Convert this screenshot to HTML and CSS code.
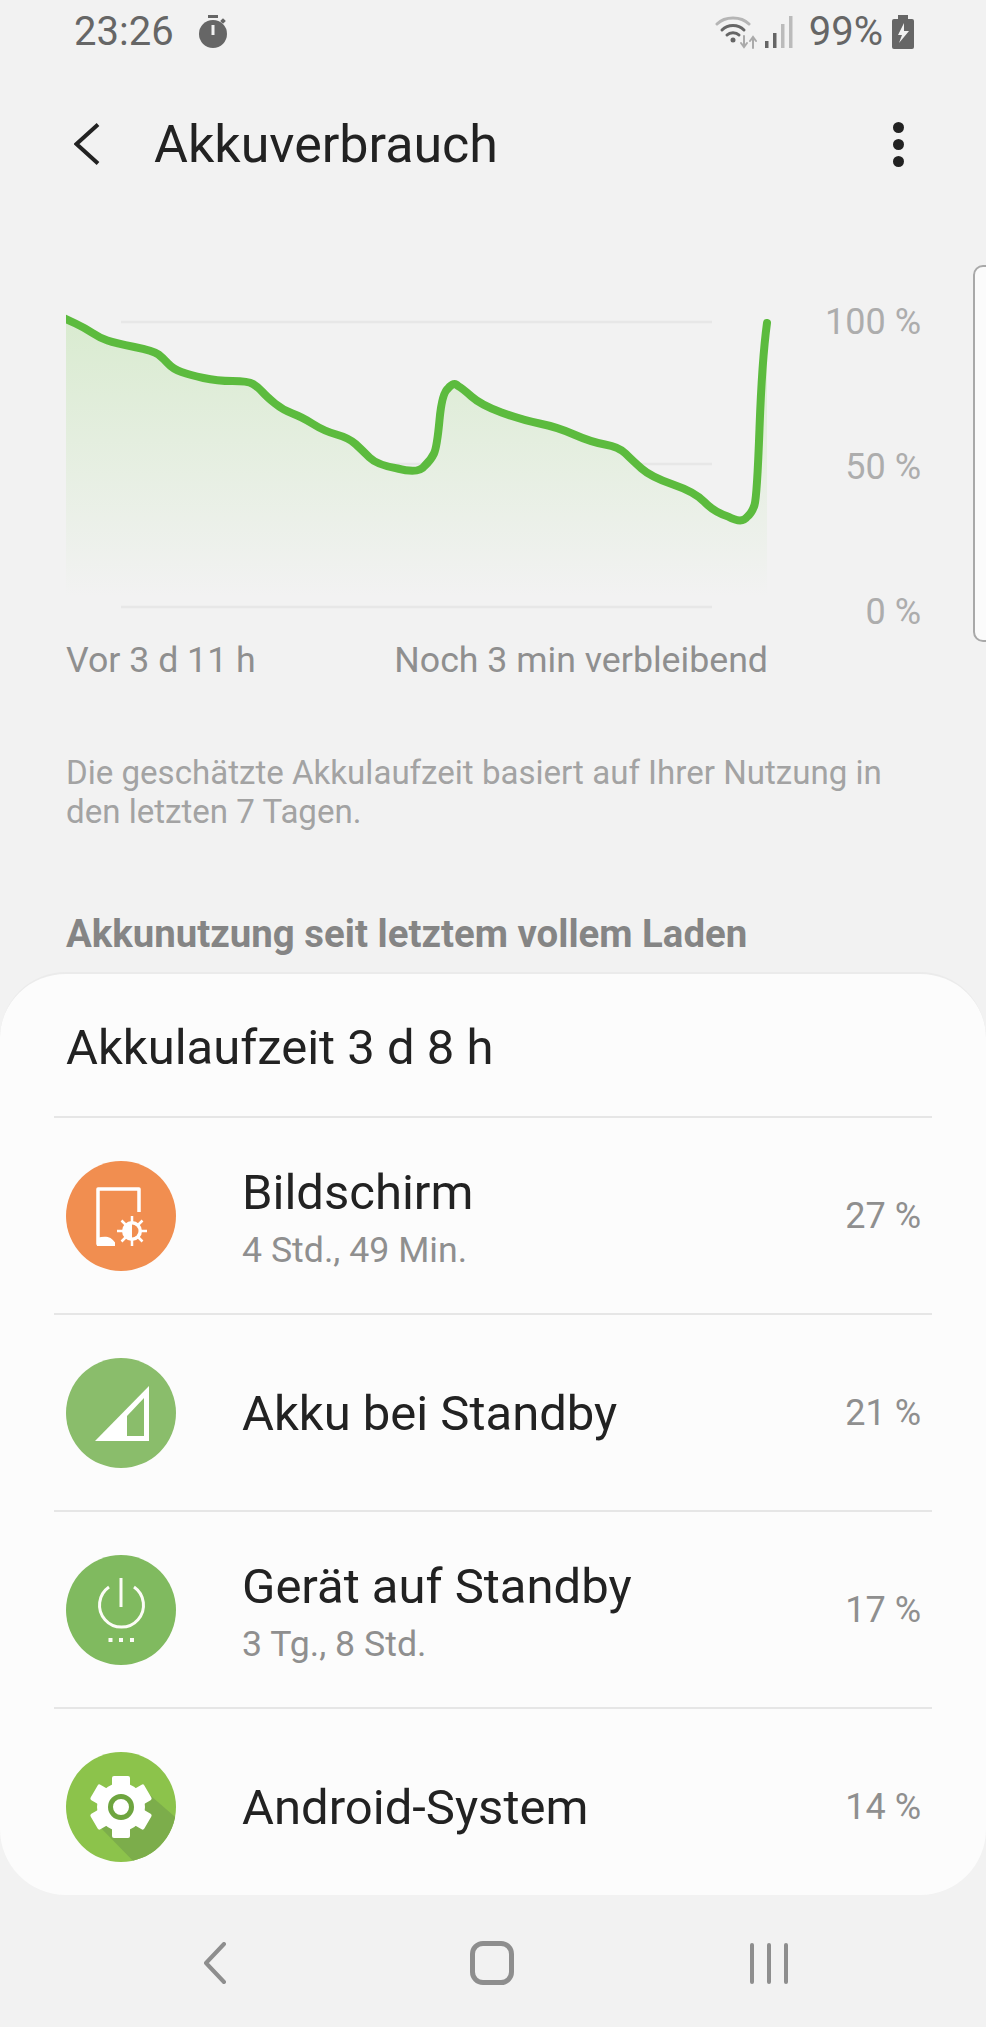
FILE: index.html
```html
<!DOCTYPE html>
<html lang="de">
<head>
    <meta charset="UTF-8">
    <meta name="viewport" content="width=device-width, initial-scale=1.0">
    <title>Akkuverbrauch</title>
    <link rel="stylesheet" href="styles.css">
</head>
<body>
<div class="screen">

    <div class="status">
        <div class="status-left">
            <span class="clock">23:26</span>
            <svg class="stopwatch" width="28" height="34" viewBox="0 0 28 34">
                <rect x="9" y="0" width="10" height="3" fill="#666"/>
                <circle cx="14" cy="19" r="14" fill="#666"/>
                <rect x="22" y="4" width="4" height="4" transform="rotate(45 24 6)" fill="#666"/>
                <rect x="12.500" y="10" width="3" height="10" fill="#f2f2f2"/>
            </svg>
        </div>
        <div class="status-right">
            <svg class="wifi" width="42" height="34" viewBox="0 0 42 34" fill="none" stroke-linecap="round">
                <path d="M2 9 C10 1 26 1 34 9" stroke="#b5b5b5" stroke-width="3"/>
                <path d="M7 15 C13 9 23 9 29 15" stroke="#666" stroke-width="3"/>
                <path d="M12 20 C15 17 21 17 24 20" stroke="#666" stroke-width="3"/>
                <circle cx="18" cy="25" r="2.500" fill="#666"/>
                <path d="M29 21 V31 M26 28 L29 32 L32 28" stroke="#aaa" stroke-width="2"/>
                <path d="M38 33 V23 M35 26 L38 22 L41 26" stroke="#aaa" stroke-width="2"/>
            </svg>
            <svg class="bars" width="28" height="34" viewBox="0 0 28 34">
                <rect x="0" y="26" width="3.500" height="7" fill="#666"/>
                <rect x="8" y="18" width="3.500" height="15" fill="#666"/>
                <rect x="16" y="9" width="3.500" height="24" fill="#bbb"/>
                <rect x="24" y="1" width="3.500" height="32" fill="#bbb"/>
            </svg>
            <span class="percent">99%</span>
            <svg class="battery" width="22" height="34" viewBox="0 0 22 34">
                <rect x="6" y="0" width="10" height="4" fill="#666"/>
                <rect x="0" y="4" width="22" height="30" rx="2" fill="#666"/>
                <path d="M12 8 L6 20 H10 L7 28 L17 16 H12 Z" fill="#f2f2f2"/>
            </svg>
        </div>
    </div>

    <div class="toolbar">
        <svg class="back" width="26" height="42" viewBox="0 0 26 42" fill="none">
            <path d="M24 1.500 L2.500 21 L24 40.500" stroke="#222" stroke-width="4"/>
        </svg>
        <h1>Akkuverbrauch</h1>
        <div class="more"><i></i><i></i><i></i></div>
    </div>

    <div class="chart">
        <svg class="graph" width="710" height="320" viewBox="66 300 710 320">
            <defs>
                <linearGradient id="fade" x1="0" y1="0" x2="0" y2="1">
                    <stop offset="0" stop-color="#d9ebd0"/>
                    <stop offset="1" stop-color="#f2f2f2"/>
                </linearGradient>
            </defs>
            <path d="M121 322 H712 M121 464 H712 M121 607 H712" stroke="#e7e7e7" stroke-width="2.500"/>
            <path fill="url(#fade)" d="M66 319 L75.500 323.500 Q85 328 92.500 333 Q100 338 107.500 340.500 Q115 343 134.500 347 Q154 351 158.500 354.500 Q163 358 168 363.500 Q173 369 181.500 372 Q190 375 203.500 378 Q217 381 232.500 381 Q248 381 253 384 Q258 387 262.500 392 Q267 397 275 403.500 Q283 410 292.500 413.500 Q302 417 313 424 Q324 431 336.500 434.500 Q349 438 355.500 444 Q362 450 369.500 457.500 Q377 465 397.500 468.500 Q419 474 424.500 466 Q431 460 434 453.500 Q437 447 439.500 420 Q442 393 448 388.500 Q454 381 458 386 Q462 388 471.500 396.500 Q481 405 501.500 412.500 Q522 420 539.500 423.500 Q557 427 574 434.500 Q591 442 605 444.500 Q619 447 625.500 453.500 Q632 460 641.500 468.500 Q651 477 673 484.500 Q695 492 704.500 502 Q714 512 728 516.500 Q742 524 747 517 Q752 513 754.500 505 Q757 497 759.500 428.500 Q762 360 767 323 V596 H66 Z"/>
            <path fill="none" stroke="#5cbb3e" stroke-width="8" stroke-linecap="round" stroke-linejoin="round" d="M66 319 L75.500 323.500 Q85 328 92.500 333 Q100 338 107.500 340.500 Q115 343 134.500 347 Q154 351 158.500 354.500 Q163 358 168 363.500 Q173 369 181.500 372 Q190 375 203.500 378 Q217 381 232.500 381 Q248 381 253 384 Q258 387 262.500 392 Q267 397 275 403.500 Q283 410 292.500 413.500 Q302 417 313 424 Q324 431 336.500 434.500 Q349 438 355.500 444 Q362 450 369.500 457.500 Q377 465 397.500 468.500 Q419 474 424.500 466 Q431 460 434 453.500 Q437 447 439.500 420 Q442 393 448 388.500 Q454 381 458 386 Q462 388 471.500 396.500 Q481 405 501.500 412.500 Q522 420 539.500 423.500 Q557 427 574 434.500 Q591 442 605 444.500 Q619 447 625.500 453.500 Q632 460 641.500 468.500 Q651 477 673 484.500 Q695 492 704.500 502 Q714 512 728 516.500 Q742 524 747 517 Q752 513 754.500 505 Q757 497 759.500 428.500 Q762 360 767 323"/>
        </svg>
        <div class="axis">
            <span>100 %</span>
            <span>50 %</span>
            <span>0 %</span>
        </div>
    </div>

    <div class="times">
        <span>Vor 3 d 11 h</span>
        <span>Noch 3 min verbleibend</span>
    </div>

    <p class="note">Die geschätzte Akkulaufzeit basiert auf Ihrer Nutzung in den letzten 7 Tagen.</p>

    <h2>Akkunutzung seit letztem vollem Laden</h2>

    <div class="card">
        <div class="card-title">Akkulaufzeit 3 d 8 h</div>

        <div class="row">
            <svg class="icon" width="110" height="110" viewBox="-55 -55 110 110">
                <circle r="55" fill="#f18e50"/>
                <path d="M-6 28 H-23 V-27 H18 V-4" fill="none" stroke="#fff" stroke-width="3.500" stroke-linejoin="round"/>
                <path d="M-24 22 C-16 20 -10 20 -6 27 V30 H-24 Z" fill="#fff"/>
                <path d="M11 0 V30 M-4 15 H26 M0.500 4.500 L21.500 25.500 M21.500 4.500 L0.500 25.500" stroke="#fff" stroke-width="2.500"/>
                <circle cx="11" cy="15" r="10" fill="#fff"/>
                <path d="M11 8.500 A6.500 6.500 0 0 1 11 21.500 Z" fill="#f18e50"/>
            </svg>
            <div class="row-text">
                <div class="row-title">Bildschirm</div>
                <div class="row-sub">4 Std., 49 Min.</div>
            </div>
            <span class="row-value">27 %</span>
        </div>

        <div class="row">
            <svg class="icon" width="110" height="110" viewBox="-55 -55 110 110">
                <circle r="55" fill="#8abd6b"/>
                <path d="M-26 28 L28 -27 V28 Z" fill="#fff"/>
                <path d="M6 23 H23 V-15 L6 3 Z" fill="#8abd6b"/>
            </svg>
            <div class="row-text">
                <div class="row-title">Akku bei Standby</div>
            </div>
            <span class="row-value">21 %</span>
        </div>

        <div class="row">
            <svg class="icon" width="110" height="110" viewBox="-55 -55 110 110">
                <circle r="55" fill="#80ba5f"/>
                <path d="M-12 -23 A22 22 0 1 0 13 -23" fill="none" stroke="#fcfcf6" stroke-width="3"/>
                <path d="M0 -32 V-3" stroke="#fcfcf6" stroke-width="3"/>
                <rect x="-12.500" y="28" width="4" height="4" fill="#fcfcf6"/>
                <rect x="-2" y="28" width="4" height="4" fill="#fcfcf6"/>
                <rect x="9" y="28" width="4" height="4" fill="#fcfcf6"/>
            </svg>
            <div class="row-text">
                <div class="row-title">Gerät auf Standby</div>
                <div class="row-sub">3 Tg., 8 Std.</div>
            </div>
            <span class="row-value">17 %</span>
        </div>

        <div class="row">
            <svg class="icon" width="110" height="110" viewBox="-55 -55 110 110">
                <defs>
                    <clipPath id="disc"><circle r="55"/></clipPath>
                </defs>
                <circle r="55" fill="#8cc34b"/>
                <path d="M-24 17 L18 60 H60 V15 L22 -18 Z" fill="#7cad4b" clip-path="url(#disc)"/>
                <g fill="#fff">
                    <circle r="24"/>
                    <rect x="-9" y="-31" width="18" height="14" rx="2"/>
                    <rect x="-9" y="-31" width="18" height="14" rx="2" transform="rotate(60)"/>
                    <rect x="-9" y="-31" width="18" height="14" rx="2" transform="rotate(120)"/>
                    <rect x="-9" y="-31" width="18" height="14" rx="2" transform="rotate(180)"/>
                    <rect x="-9" y="-31" width="18" height="14" rx="2" transform="rotate(240)"/>
                    <rect x="-9" y="-31" width="18" height="14" rx="2" transform="rotate(300)"/>
                </g>
                <circle r="10.500" fill="#fff" stroke="#6ea53f" stroke-width="5"/>
            </svg>
            <div class="row-text">
                <div class="row-title">Android-System</div>
            </div>
            <span class="row-value">14 %</span>
        </div>
    </div>

    <div class="nav">
        <svg width="24" height="42" viewBox="0 0 24 42" fill="none">
            <path d="M21 2 L3 21 L21 40" stroke="#8e8e8e" stroke-width="4" stroke-linecap="round" stroke-linejoin="round"/>
        </svg>
        <div class="nav-home"></div>
        <div class="nav-recent"><i></i><i></i><i></i></div>
    </div>

    <div class="edge-tab"></div>
</div>
</body>
</html>
```

FILE: styles.css
```css
* {
    box-sizing: border-box;
}
html, body {
    margin: 0;
    padding: 0;
}
body {
    background: #f2f2f2;
    font-family: Roboto, "Noto Sans", sans-serif;
    color: #222;
}
.screen {
    position: relative;
    width: 986px;
    height: 2027px;
    overflow: hidden;
    display: flex;
    flex-direction: column;
}

.status {
    height: 66px;
    padding: 15px 72px 0 74px;
    display: flex;
    justify-content: space-between;
    align-items: flex-start;
    color: #666;
    font-size: 40px;
    line-height: 36px;
}
.status-left, .status-right {
    display: flex;
    align-items: center;
    height: 34px;
}
.stopwatch {
    margin-left: 25px;
}
.status-right .bars {
    margin-left: 8px;
}
.percent {
    margin-left: 16px;
}
.battery {
    margin-left: 9px;
}

.toolbar {
    height: 80px;
    margin-top: 38px;
    padding: 0 82px 0 74px;
    display: flex;
    align-items: center;
}
.toolbar h1 {
    margin: 0 0 0 54px;
    font-size: 52px;
    font-weight: 400;
    flex: 1;
}
.more {
    display: flex;
    flex-direction: column;
    gap: 6px;
}
.more i {
    width: 11px;
    height: 11px;
    border-radius: 50%;
    background: #222;
}

.chart {
    margin-top: 116px;
    padding-left: 66px;
    display: flex;
    height: 320px;
}
.axis {
    width: 145px;
    height: 334px;
    display: flex;
    flex-direction: column;
    justify-content: space-between;
    align-items: flex-end;
    color: #adadad;
    font-size: 36px;
    line-height: 44px;
}

.times {
    width: 768px;
    margin-top: 18px;
    padding-left: 66px;
    display: flex;
    justify-content: space-between;
    color: #8f8f8f;
    font-size: 35.700px;
    line-height: 44px;
}

.note {
    margin: 71px 70px 0 66px;
    color: #a3a3a3;
    font-size: 33.100px;
    line-height: 39px;
}

h2 {
    margin: 81px 0 0 66px;
    color: #858585;
    font-size: 38.400px;
    line-height: 44px;
    font-weight: 700;
}

.card {
    margin-top: 16px;
    height: 923px;
    background: #fcfcfc;
    border-top: 2px solid #ebebeb;
    border-radius: 66px;
    overflow: hidden;
    flex-shrink: 0;
}
.card-title {
    height: 142px;
    padding: 44px 0 0 66px;
    font-size: 49px;
    line-height: 60px;
}
.row {
    height: 197px;
    margin: 0 54px;
    padding: 0 11px 0 12px;
    border-top: 2px solid #e6e6e6;
    display: flex;
    align-items: center;
}
.icon {
    flex-shrink: 0;
}
.row-text {
    flex: 1;
    margin-left: 66px;
    padding-top: 3px;
}
.row-title {
    font-size: 49px;
    line-height: 62px;
}
.row-sub {
    margin-top: 4px;
    color: #8f8f8f;
    font-size: 35.700px;
    line-height: 44px;
}
.row-value {
    color: #8f8f8f;
    font-size: 36px;
}

.nav {
    height: 131px;
    padding: 5px 80px 0 76px;
    display: grid;
    grid-template-columns: repeat(3, 277px);
    justify-items: center;
    align-items: center;
}
.nav-home {
    width: 44px;
    height: 44px;
    border: 5px solid #8e8e8e;
    border-radius: 13px;
}
.nav-recent {
    display: flex;
    gap: 13px;
}
.nav-recent i {
    width: 4px;
    height: 41px;
    border-radius: 2px;
    background: #8e8e8e;
}

/* edge panel handle, sits over the page */
.edge-tab {
    position: absolute;
    top: 265px;
    right: -4px;
    width: 17px;
    height: 377px;
    border: 2px solid #a9a9a9;
    border-radius: 10px 0 0 10px;
    background: #fbfbfb;
}
```
